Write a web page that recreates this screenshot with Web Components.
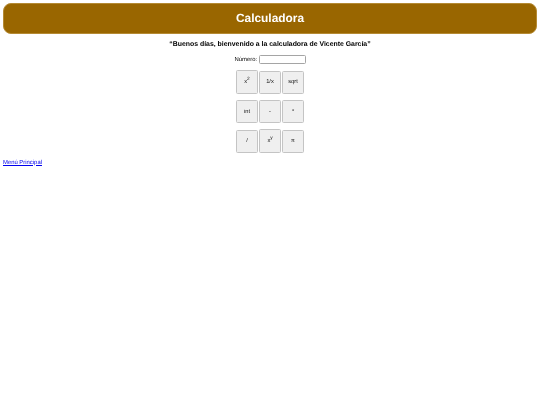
<!DOCTYPE html>
<html><head><meta charset="utf-8"><title>Calculadora</title>
<style>
html,body{margin:0;background:#fff}
body{padding:3px;font-family:"Liberation Sans",Arial,sans-serif;font-size:5.9px;color:#000;text-rendering:geometricPrecision;min-height:399px;box-sizing:content-box;filter:blur(.22px)}
</style></head><body>
<calc-header>Calculadora</calc-header>
<calc-greeting>“Buenos días, bienvenido a la calculadora de Vicente García”</calc-greeting>
<calc-field label="Número:"></calc-field>
<calc-row><calc-key shift>x<sup>2</sup></calc-key><calc-key>1/x</calc-key><calc-key>sqrt</calc-key></calc-row>
<calc-row><calc-key>int</calc-key><calc-key>-</calc-key><calc-key>*</calc-key></calc-row>
<calc-row><calc-key>/</calc-key><calc-key shift>x<sup>y</sup></calc-key><calc-key>π</calc-key></calc-row>
<calc-link href="#">Menú Principal</calc-link>
<script>
function def(name,css,html,init){
  customElements.define(name,class extends HTMLElement{
    constructor(){super();const r=this.attachShadow({mode:"open"});
      r.innerHTML="<style>"+css+"</style>"+html;}
    connectedCallback(){if(init)init(this)}
  });
}
def("calc-header",
 ":host{display:block;height:31px;box-sizing:border-box;background:#996600;border:.5px solid #b58a33;border-radius:8px;color:#fff;font-weight:bold;font-size:11.9px;line-height:29px;text-align:center}",
 "<slot></slot>");
def("calc-greeting",
 ":host{display:block;margin-top:6px;height:9px;line-height:9px;text-align:center;font-weight:bold;font-size:6.9px}",
 "<slot></slot>");
def("calc-field",
 ":host{display:flex;justify-content:center;align-items:center;gap:1.5px;margin-top:5.5px;height:10px}"+
 "input{box-sizing:border-box;width:47px;height:9.5px;margin:0;padding:0 1px;border:.6px solid #a5a5a5;border-radius:1.5px;background:#fff;font:inherit}",
 "<label for='i'></label><input id='i' type='text'>",
 el=>{el.shadowRoot.querySelector("label").textContent=el.getAttribute("label")});
def("calc-row",
 ":host{display:flex;justify-content:center;gap:1px;margin-top:6.4px;height:23px}",
 "<slot></slot>");
def("calc-key",
 ":host{display:block}"+
 "button{display:block;box-sizing:border-box;width:22px;height:23px;margin:0;padding:1.6px 0 0;background:#efefef;border:1px solid #c4c4c4;border-radius:1.5px;color:#111;font:inherit;font-size:5.7px;line-height:1;text-rendering:geometricPrecision}"+
 ":host([shift]) button{height:24px;margin-top:-1px;padding-top:2.2px}"+
 "::slotted(sup){font-size:4.8px;line-height:0}",
 "<button type='button'><slot></slot></button>");
def("calc-link",
 ":host{display:block;margin-top:6px;font-size:5.9px;line-height:8px}a{color:#0000ee}",
 "<a id='a'><slot></slot></a>",
 el=>{el.shadowRoot.querySelector("a").href=el.getAttribute("href")});
</script>
</body></html>
